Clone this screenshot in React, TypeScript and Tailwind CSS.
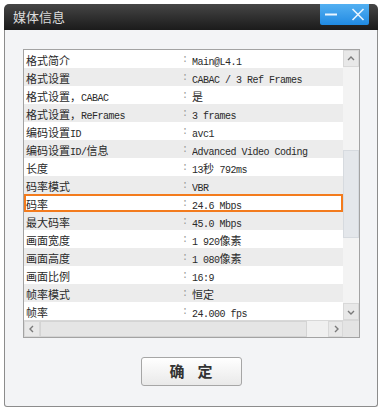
import React from "react";

const rows: [string, string][] = [
  ["格式简介", "Main@L4.1"],
  ["格式设置", "CABAC / 3 Ref Frames"],
  ["格式设置，CABAC", "是"],
  ["格式设置，ReFrames", "3 frames"],
  ["编码设置ID", "avc1"],
  ["编码设置ID/信息", "Advanced Video Coding"],
  ["长度", "13秒 792ms"],
  ["码率模式", "VBR"],
  ["码率", "24.6 Mbps"],
  ["最大码率", "45.0 Mbps"],
  ["画面宽度", "1 920像素"],
  ["画面高度", "1 080像素"],
  ["画面比例", "16:9"],
  ["帧率模式", "恒定"],
  ["帧率", "24.000 fps"],
];

const CJK = /[\u3000-\u9fff\uff00-\uffef]/;

function Mixed({ text }: { text: string }) {
  const parts = text.match(/[\u3000-\u9fff\uff00-\uffef]+|[^\u3000-\u9fff\uff00-\uffef]+/g) || [];
  return (
    <>
      {parts.map((p, i) =>
        CJK.test(p) ? (
          <span key={i} className="font-['Noto_Sans_CJK_SC',sans-serif] text-[11px]">
            {p}
          </span>
        ) : (
          <span
            key={i}
            className="font-['Liberation_Mono',monospace] text-[10px] tracking-[-0.5px] whitespace-pre"
          >
            {p}
          </span>
        )
      )}
    </>
  );
}

function Chevron({ dir }: { dir: "up" | "down" | "left" | "right" }) {
  const pts: Record<string, string> = {
    up: "2,6 5,3 8,6",
    down: "2,4 5,7 8,4",
    left: "6,2 3,5 6,8",
    right: "4,2 7,5 4,8",
  };
  return (
    <svg width="10" height="10" viewBox="0 0 10 10">
      <polyline points={pts[dir]} fill="none" stroke="#7a7a7a" strokeWidth="1.4" />
    </svg>
  );
}

export default function App() {
  return (
    <div className="w-[388px] h-[419px] bg-white pt-[4px] pl-[4px]">
      <div className="w-[374px] h-[403px] flex flex-col">
        {/* title bar */}
        <div className="h-[26px] rounded-t-[5px] bg-gradient-to-b from-[#464646] to-[#1b1b1b] flex items-start justify-between">
          <div className="pl-[9px] pt-[4px] text-[13px] leading-[17px] text-[#dcdcdc] font-['Noto_Sans_CJK_SC',sans-serif]">
            媒体信息
          </div>
          <div className="mr-[9px] w-[49px] h-[21px] rounded-b-[2px] bg-gradient-to-b from-[#52b0f2] to-[#1f8ae2] flex items-center">
            <svg width="49" height="21" viewBox="0 0 49 21">
              <line x1="5" y1="10.5" x2="17" y2="10.5" stroke="#eaf5ff" strokeWidth="2" />
              <line x1="32.5" y1="5" x2="43.5" y2="16" stroke="#eaf5ff" strokeWidth="1.6" />
              <line x1="43.5" y1="5" x2="32.5" y2="16" stroke="#eaf5ff" strokeWidth="1.6" />
            </svg>
          </div>
        </div>
        {/* body */}
        <div className="flex-1 bg-[#f3f4f6] border-x border-b border-[#8c8c8c] rounded-b-[3px] flex flex-col pt-[19px] pl-[18px]">
          <div className="w-[337px] h-[289px] border border-[#a3a3a3] bg-white flex flex-col">
            <div className="flex h-[270px]">
              <div className="w-[319px] flex flex-col">
                {rows.map(([k, v], i) => (
                  <div
                    key={i}
                    className={
                      "h-[18px] flex items-center text-[#2a2a2a] " +
                      (i % 2 === 1 ? "bg-[#ececec] " : "bg-white ") +
                      (i === 8 ? "outline-2 -outline-offset-2 outline-[#f37b1d]" : "")
                    }
                  >
                    <div className="w-[158px] pl-[2px] whitespace-nowrap overflow-hidden">
                      <Mixed text={k} />
                    </div>
                    <div className="w-[10px] font-['Liberation_Mono',monospace] text-[10px] text-[#999]">:</div>
                    <div className="flex-1 whitespace-nowrap overflow-hidden">
                      <Mixed text={v} />
                    </div>
                  </div>
                ))}
              </div>
              {/* vertical scrollbar */}
              <div className="w-[16px] bg-[#f3f3f3] flex flex-col">
                <div className="h-[17px] bg-[#e8e8e8] border border-[#d8d8d8] flex items-center justify-center">
                  <Chevron dir="up" />
                </div>
                <div className="h-[83px]" />
                <div className="h-[88px] bg-[#e4e7eb] border border-[#d6dadf]" />
                <div className="flex-1" />
                <div className="h-[17px] bg-[#e8e8e8] border border-[#d8d8d8] flex items-center justify-center">
                  <Chevron dir="down" />
                </div>
              </div>
            </div>
            {/* horizontal scrollbar */}
            <div className="flex h-[17px] border-t border-[#d8d8d8]">
              <div className="w-[16px] bg-[#e8e8e8] border border-[#d8d8d8] flex items-center justify-center">
                <Chevron dir="left" />
              </div>
              <div className="w-[267px] bg-[#e5e5e5] border border-[#d4d4d4]" />
              <div className="w-[21px] bg-[#f0f0f0]" />
              <div className="w-[15px] bg-[#e8e8e8] border border-[#d8d8d8] flex items-center justify-center">
                <Chevron dir="right" />
              </div>
              <div className="flex-1 bg-[#e4e4e4]" />
            </div>
          </div>
          <div className="flex justify-center pr-[18px] mt-[19px]">
            <div className="w-[101px] h-[29px] rounded-[3px] border border-[#a6a6a6] bg-gradient-to-b from-white to-[#e9e9e9] flex items-center justify-center gap-[13px] font-['Noto_Sans_CJK_SC',sans-serif] font-bold text-[15px] text-[#333]">
              <span>确</span>
              <span>定</span>
            </div>
          </div>
        </div>
      </div>
    </div>
  );
}
